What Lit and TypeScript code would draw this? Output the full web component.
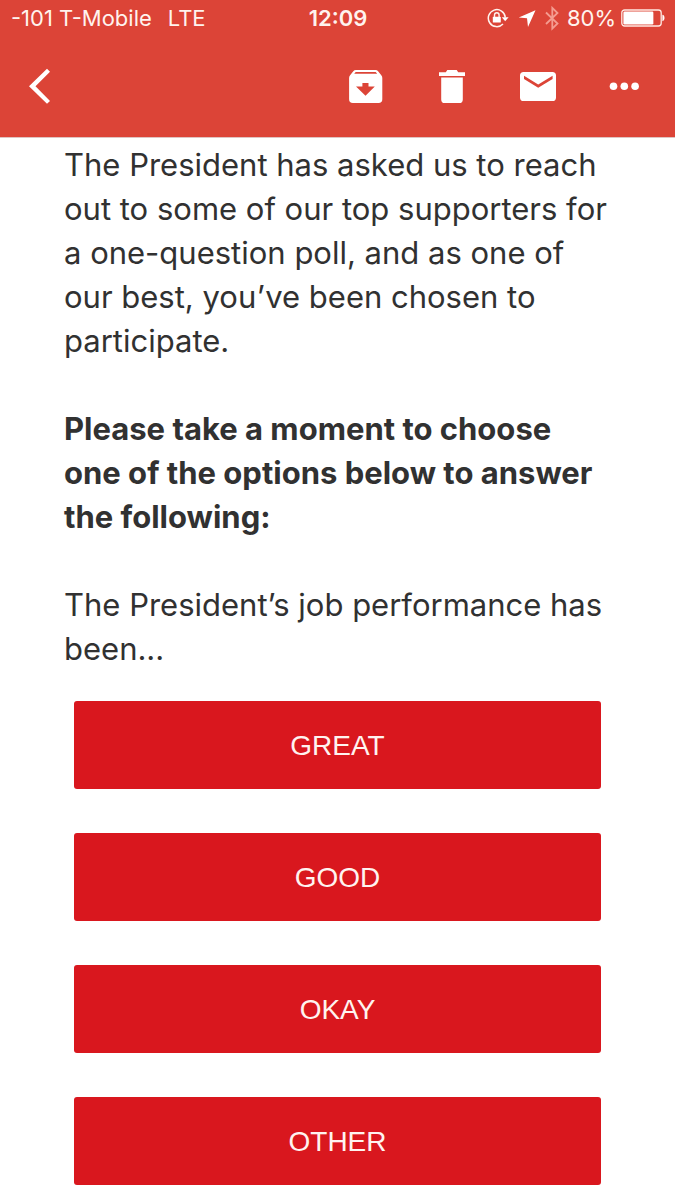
import { LitElement, html, css, svg } from "lit";
import { customElement, property } from "lit/decorators.js";

@customElement("status-bar")
class StatusBar extends LitElement {
  @property() carrier = "-101 T-Mobile";
  @property() network = "LTE";
  @property() time = "12:09";
  @property({ type: Number }) battery = 80;

  static styles = css`
    :host {
      display: block;
      color: #fff3ee;
      font-size: 22px;
      line-height: 36px;
    }
    .bar {
      display: grid;
      grid-template-columns: 1fr auto 1fr;
      align-items: center;
      padding: 0 10px 0 11px;
      height: 36px;
    }
    .side {
      display: flex;
      align-items: center;
      gap: 16px;
      white-space: nowrap;
    }
    .end {
      justify-content: flex-end;
      gap: 5px;
    }
    .time {
      font-weight: 600;
    }
    .icons {
      display: flex;
      align-items: center;
      gap: 9px;
      margin-right: 3px;
    }
    svg {
      display: block;
    }
  `;

  render() {
    return html`
      <div class="bar">
        <div class="side"><span>${this.carrier}</span><span>${this.network}</span></div>
        <div class="time">${this.time}</div>
        <div class="side end">
          <div class="icons">
            <svg width="22" height="24" viewBox="0 0 22 24" fill="none" stroke="#fff3ee" aria-label="Rotation lock">
              <path d="M16 18A8.500 8.500 0 1 1 18.300 11.500" stroke-width="1.5" />
              <path d="M14.800 11.200h6.800L18.200 15.200z" fill="#fff" stroke="none" />
              <rect x="5.800" y="10.800" width="8" height="5.800" rx="0.6" fill="#fff" stroke="none" />
              <path d="M7.500 11V9a2.300 2.300 0 0 1 4.600 0V11" stroke-width="1.400" />
            </svg>
            <svg width="18" height="24" viewBox="0 0 18 24" aria-label="Location">
              <path d="M17.500 4.200 0.800 11.600 9 12.300 10 21z" fill="#fff" />
            </svg>
            <svg width="14" height="26" viewBox="0 0 14 26" fill="none" stroke="#f49c90" stroke-width="1.800" aria-label="Bluetooth">
              <path d="M1 7.500 12.500 18.500 7.300 23.600V2.800L12.500 8 1 19" />
            </svg>
          </div>
          <span>${this.battery}%</span>
          <svg width="44" height="20" viewBox="0 0 44 20" aria-label="Battery">
            <rect x="0.8" y="2" width="39.4" height="16" rx="2.8" fill="none" stroke="#ffe9e3" stroke-width="1.3" />
            <rect x="2.4" y="3.6" width=${(36.2 * this.battery) / 100 + 1} height="12.8" rx="1.2" fill="#fff" />
            <path d="M41.4 6.8c2.8.3 2.8 6.1 0 6.400z" fill="#fff" />
          </svg>
        </div>
      </div>
    `;
  }
}

const tools = [
  {
    label: "Archive",
    art: svg`<path fill-rule="evenodd" d="M7.900 2h19.600q1.700 0 2.600 1.200l3.200 4q1 1.200 1 2.800v21.200q0 3.800-3.800 3.800H4.900q-3.800 0-3.800-3.800V10q0-1.600 1-2.800l3.200-4Q6.200 2 7.900 2zM7.700 4 6.200 5.800h23L27.700 4zM14.400 15.100v3.500H8l9.500 9.200 9.300-9.200h-6.300v-3.500z" />`,
  },
  {
    label: "Delete",
    art: svg`<path d="M5 4.200h6.800L13.300 2h9.400l1.500 2.200H31v3.900H5zM7.200 9.400h21.600v22q0 3.600-3.600 3.600H10.800q-3.600 0-3.600-3.600z" />`,
  },
  {
    label: "Mark unread",
    art: svg`<path fill-rule="evenodd" d="M3.600 4h28.800Q36 4 36 7.600v21.800q0 3.600-3.600 3.600H3.600Q0 33 0 29.400V7.600Q0 4 3.600 4zM4 7.700v3.200l14.200 8.800 14.400-8.800V7.700l-14.400 8.800z" />`,
  },
  {
    label: "More",
    art: svg`<circle cx="7.500" cy="18.300" r="3.800" /><circle cx="18.300" cy="18.300" r="3.800" /><circle cx="29.100" cy="18.300" r="3.800" />`,
  },
];

@customElement("mail-toolbar")
class MailToolbar extends LitElement {
  static styles = css`
    :host {
      display: block;
    }
    nav {
      display: flex;
      align-items: center;
      padding: 0 8px 1px 0;
    }
    button {
      display: grid;
      place-items: center;
      width: 86px;
      height: 100px;
      padding: 0;
      border: 0;
      background: none;
      cursor: pointer;
    }
    .back {
      width: 80px;
      margin-right: auto;
    }
    svg {
      display: block;
      fill: #fff;
    }
  `;

  render() {
    return html`
      <nav aria-label="Message actions">
        <button class="back" aria-label="Back">
          <svg width="36" height="36" viewBox="0 0 36 36">
            <path d="M25 0.800 28 3.700 13.500 18.300 28 32.900 25 35.800 7 18.300z" />
          </svg>
        </button>
        ${tools.map(
          (tool) => html`
            <button aria-label=${tool.label}>
              <svg width="36" height="36" viewBox="0 0 36 36">${tool.art}</svg>
            </button>
          `
        )}
      </nav>
    `;
  }
}

@customElement("app-root")
class AppRoot extends LitElement {
  static styles = css`
    :host {
      display: block;
      min-height: 100vh;
      background: #fff;
      color: #313131;
      font-family: Inter, "Noto Sans", sans-serif;
    }
    header {
      background: #dc4437;
      border-bottom: 1px solid #dfc4c2;
    }
    main {
      padding: 5px 64px 15px;
      font-size: 31px;
      line-height: 44px;
    }
    p {
      margin: 0 0 44px;
    }
    .question {
      margin-bottom: 30px;
    }
    .options {
      display: flex;
      flex-direction: column;
      gap: 44px;
      padding: 0 10px;
    }
    .option {
      height: 88px;
      padding: 2px 0 0;
      border: 0;
      border-radius: 3px;
      background: #d9171e;
      color: #fff3f0;
      font-family: "Liberation Sans", Arial, sans-serif;
      font-size: 28px;
      cursor: pointer;
    }
  `;

  render() {
    return html`
      <header>
        <status-bar></status-bar>
        <mail-toolbar></mail-toolbar>
      </header>
      <main>
        <p>
          The President has asked us to reach out to some of our top supporters for a
          one-question poll, and as one of our best, you’ve been chosen to participate.
        </p>
        <p>
          <strong>Please take a moment to choose one of the options below to answer the following:</strong>
        </p>
        <p class="question">The President’s job performance has been...</p>
        <div class="options">
          ${["GREAT", "GOOD", "OKAY", "OTHER"].map((label) => html`<button class="option">${label}</button>`)}
        </div>
      </main>
    `;
  }
}
